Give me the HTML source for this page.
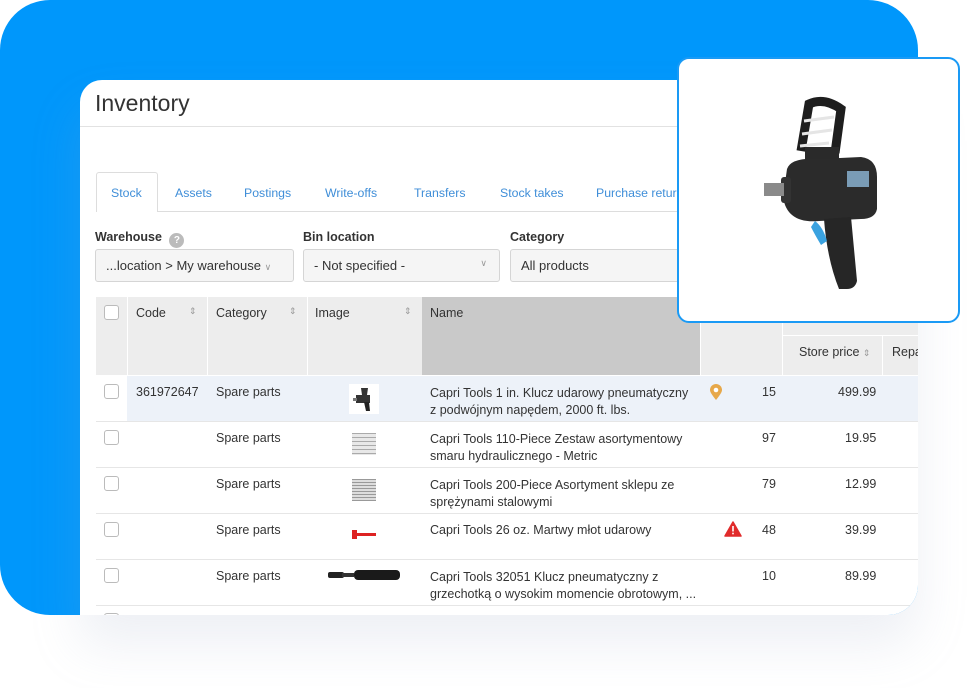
<!DOCTYPE html>
<html><head><meta charset="utf-8"><style>
*{box-sizing:border-box;margin:0;padding:0}
body{width:978px;height:688px;background:#fff;position:relative;overflow:hidden;font-family:"Liberation Sans",sans-serif;}
.blue{position:absolute;left:0;top:0;width:918px;height:615px;background:#0097fb;border-radius:50px 50px 30px 50px;}
.card{position:absolute;left:80px;top:80px;width:838px;height:535px;background:#fff;border-radius:22px 0 30px 0;overflow:hidden;box-shadow:0 30px 50px rgba(160,170,200,.18);}
.abs{position:absolute}
.t{color:#333;font-size:12.5px;white-space:nowrap}
.tab{position:absolute;top:106px;font-size:12.3px;color:#3f8ed8}
.sel{position:absolute;top:169px;height:33px;border:1px solid #d5d5d5;border-radius:3px;background:#f5f5f5;font-size:13px;color:#333;padding:8px 10px}
.lbl{position:absolute;top:150px;font-size:12.5px;font-weight:bold;color:#333}
.cb{position:absolute;left:24px;width:15px;height:15px;border:1px solid #bbb;border-radius:3px;background:#fff}
.hl{position:absolute;left:16px;width:822px;height:1px;background:#e6e6e6}
.sort{position:absolute;font-size:9px;color:#999}
</style></head><body>
<div class="blue"></div>
<div class="card">
  <div class="abs t" style="left:15px;top:10px;font-size:23px;color:#333">Inventory</div>
  <div class="abs" style="left:0;top:46px;width:838px;height:1px;background:#e2e2e2"></div>
  <div class="abs" style="left:16px;top:92px;width:62px;height:40px;border:1px solid #ddd;border-bottom:none;border-radius:3px 3px 0 0;background:#fff"></div>
  <div class="abs" style="left:78px;top:131px;width:760px;height:1px;background:#ddd"></div>
  <div class="tab" style="left:31px">Stock</div>
  <div class="tab" style="left:95px">Assets</div>
  <div class="tab" style="left:164px">Postings</div>
  <div class="tab" style="left:245px">Write-offs</div>
  <div class="tab" style="left:334px">Transfers</div>
  <div class="tab" style="left:420px">Stock takes</div>
  <div class="tab" style="left:516px">Purchase returns</div>
  <div class="lbl" style="left:15px">Warehouse <span style="display:inline-block;width:15px;height:15px;border-radius:50%;background:#bbb;color:#fff;font-size:10px;text-align:center;line-height:15px;margin-left:4px;vertical-align:-2px">?</span></div>
  <div class="lbl" style="left:223px">Bin location</div>
  <div class="lbl" style="left:430px">Category</div>
  <div class="sel" style="left:15px;width:199px">...location &gt; My warehouse <span style="color:#999;font-size:9px">&#8744;</span></div>
  <div class="sel" style="left:223px;width:197px">- Not specified -<span style="position:absolute;right:12px;top:8px;color:#999;font-size:9px">&#8744;</span></div>
  <div class="sel" style="left:430px;width:180px">All products</div>
  <div class="abs" style="left:16px;top:217px;width:822px;height:78px;background:#ededed"></div>
  <div class="abs" style="left:342px;top:217px;width:278px;height:78px;background:#c9c9c9"></div>
  <div class="abs" style="left:47px;top:217px;width:1px;height:78px;background:#fff"></div>
  <div class="abs" style="left:127px;top:217px;width:1px;height:78px;background:#fff"></div>
  <div class="abs" style="left:227px;top:217px;width:1px;height:78px;background:#fff"></div>
  <div class="abs" style="left:620px;top:217px;width:1px;height:78px;background:#fff"></div>
  <div class="abs" style="left:702px;top:217px;width:1px;height:78px;background:#fff"></div>
  <div class="abs" style="left:802px;top:256px;width:1px;height:39px;background:#fff"></div>
  <div class="abs" style="left:702px;top:255px;width:136px;height:1px;background:#fff"></div>
  <div class="cb" style="top:225px"></div>
  <div class="abs t" style="left:56px;top:226px">Code</div><div class="sort" style="left:109px;top:226px">&#8661;</div>
  <div class="abs t" style="left:136px;top:226px">Category</div><div class="sort" style="left:209px;top:226px">&#8661;</div>
  <div class="abs t" style="left:235px;top:226px">Image</div><div class="sort" style="left:324px;top:226px">&#8661;</div>
  <div class="abs t" style="left:350px;top:226px">Name</div>
  <div class="abs t" style="left:719px;top:265px">Store price <span style="font-size:9px;color:#999">&#8661;</span></div>
  <div class="abs t" style="left:812px;top:265px">Repa</div>
  <div class="abs" style="left:47px;top:296px;width:791px;height:45px;background:#edf2f9"></div>
  <div class="hl" style="top:341px"></div><div class="hl" style="top:387px"></div><div class="hl" style="top:433px"></div><div class="hl" style="top:479px"></div><div class="hl" style="top:525px"></div>

  <div class="cb" style="top:304px"></div>
  <div class="abs t" style="left:56px;top:305px">361972647</div>
  <div class="abs t" style="left:136px;top:305px">Spare parts</div>
  <div class="abs" style="left:269px;top:304px;width:30px;height:30px;background:#fff"><svg width="30" height="30"><path d="M12 4h7l-1 7h-5zM7 11h14v8h-14z" fill="#333"/><path d="M15 18h5l1 9h-4z" fill="#222"/><rect x="4" y="14" width="4" height="3" fill="#777"/></svg></div>
  <div class="abs t" style="left:350px;top:305px;line-height:17px">Capri Tools 1 in. Klucz udarowy pneumatyczny<br>z podwójnym napędem, 2000 ft. lbs.</div>
  <svg class="abs" style="left:629px;top:304px" width="14" height="17"><path d="M7 16C3 11 1 8 1 6a6 6 0 0112 0c0 2-2 5-6 10z" fill="#e7a84a"/><circle cx="7" cy="6" r="2.3" fill="#fff"/></svg>
  <div class="abs t" style="left:682px;top:305px">15</div>
  <div class="abs t" style="left:758px;top:305px">499.99</div>

  <div class="cb" style="top:350px"></div>
  <div class="abs t" style="left:136px;top:351px">Spare parts</div>
  <div class="abs" style="left:272px;top:353px;width:24px;height:22px;background:repeating-linear-gradient(#aaa 0 1px,#e8e8e8 1px 4px)"></div>
  <div class="abs t" style="left:350px;top:351px;line-height:17px">Capri Tools 110-Piece Zestaw asortymentowy<br>smaru hydraulicznego - Metric</div>
  <div class="abs t" style="left:682px;top:351px">97</div>
  <div class="abs t" style="left:765px;top:351px">19.95</div>

  <div class="cb" style="top:396px"></div>
  <div class="abs t" style="left:136px;top:397px">Spare parts</div>
  <div class="abs" style="left:272px;top:399px;width:24px;height:22px;background:repeating-linear-gradient(#999 0 1px,#ddd 1px 3px)"></div>
  <div class="abs t" style="left:350px;top:397px;line-height:17px">Capri Tools 200-Piece Asortyment sklepu ze<br>sprężynami stalowymi</div>
  <div class="abs t" style="left:682px;top:397px">79</div>
  <div class="abs t" style="left:765px;top:397px">12.99</div>

  <div class="cb" style="top:442px"></div>
  <div class="abs t" style="left:136px;top:443px">Spare parts</div>
  <svg class="abs" style="left:270px;top:448px" width="28" height="14"><rect x="2" y="2" width="5" height="9" fill="#d22"/><rect x="6" y="5" width="20" height="3" fill="#d22"/></svg>
  <div class="abs t" style="left:350px;top:443px">Capri Tools 26 oz. Martwy młot udarowy</div>
  <svg class="abs" style="left:644px;top:441px" width="18" height="16"><path d="M9 1L17 15H1z" fill="#e12b2b" stroke="#e12b2b" stroke-linejoin="round" stroke-width="1.5"/><rect x="8.2" y="5" width="1.6" height="5.5" fill="#fff"/><rect x="8.2" y="11.7" width="1.6" height="1.6" fill="#fff"/></svg>
  <div class="abs t" style="left:682px;top:443px">48</div>
  <div class="abs t" style="left:765px;top:443px">39.99</div>

  <div class="cb" style="top:488px"></div>
  <div class="abs t" style="left:136px;top:489px">Spare parts</div>
  <svg class="abs" style="left:246px;top:488px" width="76" height="14"><rect x="2" y="4" width="16" height="6" rx="2" fill="#222"/><rect x="16" y="5" width="12" height="4" fill="#333"/><rect x="28" y="2" width="46" height="10" rx="4" fill="#1a1a1a"/></svg>
  <div class="abs t" style="left:350px;top:489px;line-height:17px">Capri Tools 32051 Klucz pneumatyczny z<br>grzechotką o wysokim momencie obrotowym, ...</div>
  <div class="abs t" style="left:682px;top:489px">10</div>
  <div class="abs t" style="left:765px;top:489px">89.99</div>
  <div class="cb" style="top:533px"></div>
</div>
<div class="abs" style="left:677px;top:57px;width:283px;height:266px;background:#fff;border:2px solid #1a9af5;border-radius:12px">
  <svg width="279" height="262" viewBox="0 0 279 262">
    <path d="M122 92 L130 45 Q145 38 162 50 L156 94" fill="none" stroke="#1e1e1e" stroke-width="9"/>
    <path d="M125 62 L155 58 M123 75 L153 71 M121 87 L150 84" stroke="#e5e5e5" stroke-width="3"/>
    <rect x="126" y="88" width="34" height="16" fill="#2a2a2a"/>
    <path d="M108 110 Q112 98 140 100 L182 98 Q198 100 198 118 L198 150 Q196 160 182 160 L140 162 Q108 165 104 138z" fill="#2b2b2b"/>
    <rect x="102" y="118" width="10" height="26" rx="3" fill="#333"/>
    <rect x="168" y="112" width="22" height="16" fill="#7a9cb6"/>
    <rect x="85" y="124" width="20" height="13" fill="#8a8a8a"/>
    <path d="M145 160 L172 158 L178 222 Q176 230 168 230 L160 230 Q148 200 145 160z" fill="#262626"/>
    <path d="M136 162 Q144 168 148 182 L142 186 Q136 176 132 168z" fill="#3aa2e0"/>
  </svg>
</div>
</body></html>
